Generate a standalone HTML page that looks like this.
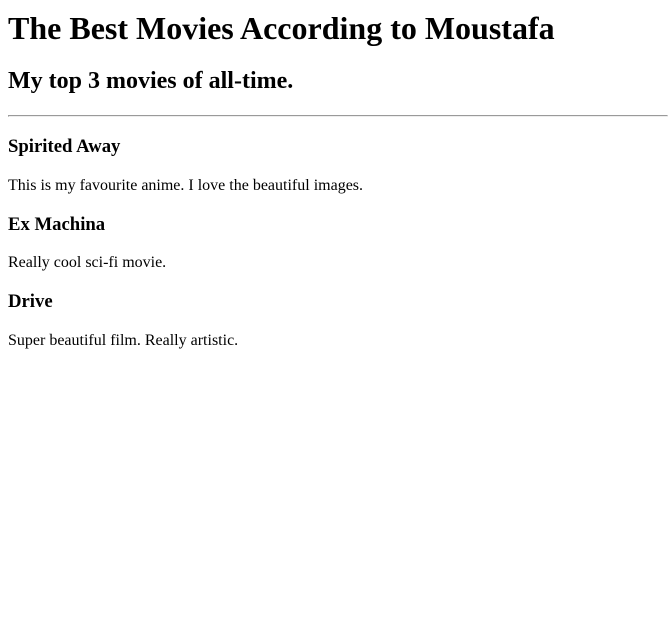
<!DOCTYPE html>
<html>
<head>
<meta charset="utf-8">
<style>
  html, body { background:#fff; }
  body { margin:8px 0 8px 8px; padding-top:2px; font-family:"Liberation Serif", serif; color:#000; }
  h1 { margin-top:0; }
</style>
</head>
<body>
<h1>The Best Movies According to Moustafa</h1>
<h2>My top 3 movies of all-time.</h2>
<hr>
<h3>Spirited Away</h3>
<p>This is my favourite anime. I love the beautiful images.</p>
<h3>Ex Machina</h3>
<p>Really cool sci-fi movie.</p>
<h3>Drive</h3>
<p>Super beautiful film. Really artistic.</p>
</body>
</html>
